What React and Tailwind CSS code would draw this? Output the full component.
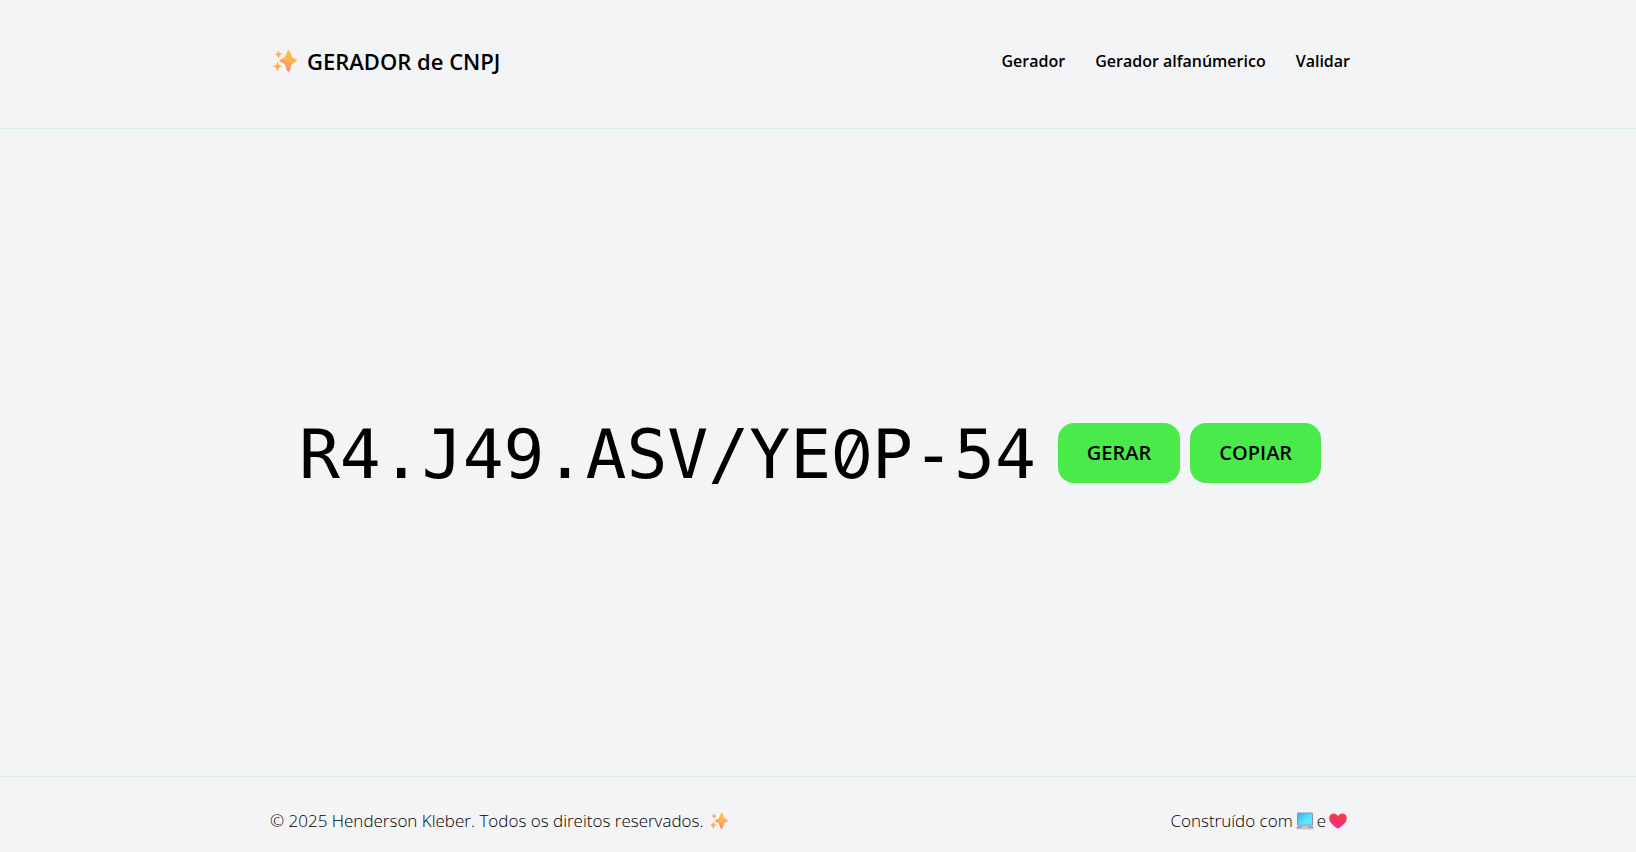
import { useId } from "react";

function Sparkles({ className }) {
  const id = useId();
  return (
    <svg viewBox="0 0 24 24" className={className} aria-hidden="true">
      <defs>
        <linearGradient id={id} x1="0.7" y1="0" x2="0.35" y2="1">
          <stop offset="0" stopColor="#fcc64a" />
          <stop offset="0.5" stopColor="#fdb254" />
          <stop offset="1" stopColor="#ff7d70" />
        </linearGradient>
      </defs>
      <g fill={`url(#${id})`}>
        <path d="M14.4 2Q15.6 0.4 16.8 2L18.7 7.2Q19.1 8.4 20.2 8.8L23.4 10.6Q24.6 11.6 23.4 12.6L20 14.4Q19 14.8 18.6 15.9L16.7 21.8Q15.4 23.6 14.1 21.8L12.2 16Q11.8 14.9 10.8 14.5L7 12.7Q5.8 11.7 7 10.7L10.9 8.8Q11.9 8.4 12.3 7.3Z" />
        <path d="M5.6 1.4L6.8 4L9.4 5.3L6.8 6.6L5.6 9.4L4.4 6.6L1.9 5.3L4.4 4Z" />
        <path d="M4.6 12.6L6 15.8L9.2 17.2L6 18.7L4.6 22.2L3.2 18.7L0.2 17.2L3.2 15.8Z" />
      </g>
    </svg>
  );
}

function Laptop({ className }) {
  const id = useId();
  return (
    <svg viewBox="0 0 18 18" className={className} aria-hidden="true">
      <defs>
        <linearGradient id={id} x1="0" y1="0" x2="1" y2="1">
          <stop offset="0" stopColor="#2fb4ea" />
          <stop offset="0.6" stopColor="#5ce6ff" />
        </linearGradient>
      </defs>
      <rect x="1" y="0.5" width="16" height="13" rx="1" fill="#8f8fa8" />
      <rect x="2" y="1.4" width="14" height="11.2" fill={`url(#${id})`} />
      <path d="M1.5 13.5H16.5L17.8 16H0.2Z" fill="#a9a3b8" />
      <path d="M6.3 14.5H11.7L12 16H6Z" fill="#d5cfe2" />
      <rect x="0.2" y="16" width="17.6" height="1.4" rx="0.6" fill="#c9bfdc" />
    </svg>
  );
}

function Heart({ className }) {
  const id = useId();
  return (
    <svg viewBox="0 0 18 18" className={className} aria-hidden="true">
      <defs>
        <linearGradient id={id} x1="0.6" y1="0" x2="0.45" y2="1">
          <stop offset="0" stopColor="#f6404a" />
          <stop offset="0.55" stopColor="#f33163" />
          <stop offset="1" stopColor="#f52ba6" />
        </linearGradient>
      </defs>
      <path
        d="M9 4C7.7 2.2 6.3 1.5 4.7 1.5C2.2 1.5 0.2 3.4 0.2 6.2C0.2 10.4 4.6 13.6 7.9 16.1Q9 16.9 10.1 16.1C13.4 13.6 17.8 10.4 17.8 6.2C17.8 3.4 15.8 1.5 13.3 1.5C11.7 1.5 10.3 2.2 9 4Z"
        fill={`url(#${id})`}
      />
    </svg>
  );
}

const links = ["Gerador", "Gerador alfanúmerico", "Validar"];

export default function App() {
  return (
    <div className="flex min-h-screen flex-col bg-[#f3f4f6] font-['Open_Sans','Noto_Sans',sans-serif] text-black">
      <header className="border-b border-[#d9f0dc] pt-[37px] pr-4 pb-[43px]">
        <div className="mx-auto flex h-12 max-w-[1080px] items-center justify-between">
          <a href="#inicio" className="flex items-center gap-[10px] text-[22px] font-semibold">
            <Sparkles className="ml-[3px] size-6" />
            GERADOR de CNPJ
          </a>
          <nav className="flex gap-[30px] text-[16px] font-semibold">
            {links.map((label) => (
              <a key={label} href={"#" + label.toLowerCase().replace(" ", "-")}>
                {label}
              </a>
            ))}
          </nav>
        </div>
      </header>

      <main className="flex grow items-center justify-center pr-4">
        <div className="flex items-center gap-[10px]">
          <output className="mr-3 pt-1 font-['DejaVu_Sans_Mono',monospace] text-[68px] leading-none">
            R4.J49.ASV/YE
            <span className="inline-block w-[41px] text-center font-['Inter',sans-serif] text-[66px] leading-none slashed-zero">
              0
            </span>
            P-54
          </output>
          <button type="button" className="h-[60px] rounded-2xl bg-[#4aea4a] px-[29px] text-[20px] font-semibold">
            GERAR
          </button>
          <button type="button" className="h-[60px] rounded-2xl bg-[#4aea4a] px-[29px] text-[20px] font-semibold">
            COPIAR
          </button>
        </div>
      </main>

      <footer className="border-t border-[#d9f0dc] pt-[35px] pr-4 pb-[22px]">
        <div className="mx-auto flex max-w-[1080px] items-center justify-between text-[17px] leading-4 font-light">
          <p className="flex items-center gap-[7px]">
            © 2025 Henderson Kleber. Todos os direitos reservados.
            <Sparkles className="size-[18px]" />
          </p>
          <p className="flex items-center gap-[3px]">
            Construído com
            <Laptop className="size-[18px]" />
            e
            <Heart className="mr-[3px] size-[18px]" />
          </p>
        </div>
      </footer>
    </div>
  );
}
